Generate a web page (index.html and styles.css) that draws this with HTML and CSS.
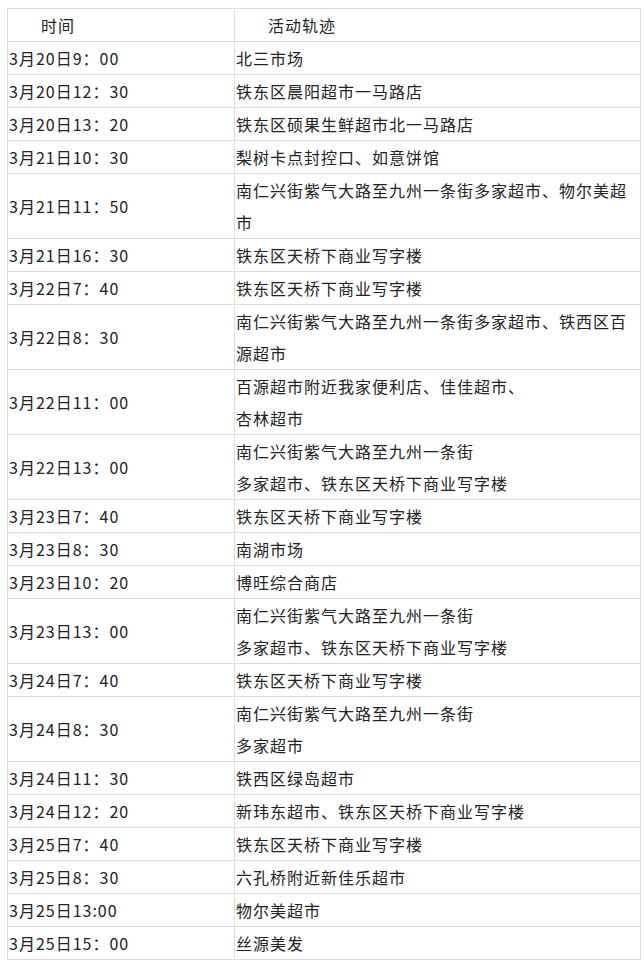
FILE: index.html
```html
<!DOCTYPE html>
<html lang="zh-CN">
<head>
<meta charset="utf-8">
<title>活动轨迹</title>
<link rel="stylesheet" href="styles.css">
</head>
<body>
<table class="track">
  <colgroup>
    <col class="col-time">
    <col class="col-place">
  </colgroup>
  <thead>
    <tr><th>时间</th><th>活动轨迹</th></tr>
  </thead>
  <tbody>
    <tr><td>3月20日9：00</td><td>北三市场</td></tr>
    <tr><td>3月20日12：30</td><td>铁东区晨阳超市一马路店</td></tr>
    <tr><td>3月20日13：20</td><td>铁东区硕果生鲜超市北一马路店</td></tr>
    <tr><td>3月21日10：30</td><td>梨树卡点封控口、如意饼馆</td></tr>
    <tr><td>3月21日11：50</td><td>南仁兴街紫气大路至九州一条街多家超市、物尔美超<br>市</td></tr>
    <tr><td>3月21日16：30</td><td>铁东区天桥下商业写字楼</td></tr>
    <tr><td>3月22日7：40</td><td>铁东区天桥下商业写字楼</td></tr>
    <tr><td>3月22日8：30</td><td>南仁兴街紫气大路至九州一条街多家超市、铁西区百<br>源超市</td></tr>
    <tr><td>3月22日11：00</td><td>百源超市附近我家便利店、佳佳超市、<br>杏林超市</td></tr>
    <tr><td>3月22日13：00</td><td>南仁兴街紫气大路至九州一条街<br>多家超市、铁东区天桥下商业写字楼</td></tr>
    <tr><td>3月23日7：40</td><td>铁东区天桥下商业写字楼</td></tr>
    <tr><td>3月23日8：30</td><td>南湖市场</td></tr>
    <tr><td>3月23日10：20</td><td>博旺综合商店</td></tr>
    <tr><td>3月23日13：00</td><td>南仁兴街紫气大路至九州一条街<br>多家超市、铁东区天桥下商业写字楼</td></tr>
    <tr><td>3月24日7：40</td><td>铁东区天桥下商业写字楼</td></tr>
    <tr><td>3月24日8：30</td><td>南仁兴街紫气大路至九州一条街<br>多家超市</td></tr>
    <tr><td>3月24日11：30</td><td>铁西区绿岛超市</td></tr>
    <tr><td>3月24日12：20</td><td>新玮东超市、铁东区天桥下商业写字楼</td></tr>
    <tr><td>3月25日7：40</td><td>铁东区天桥下商业写字楼</td></tr>
    <tr><td>3月25日8：30</td><td>六孔桥附近新佳乐超市</td></tr>
    <tr><td>3月25日13:00</td><td>物尔美超市</td></tr>
    <tr><td>3月25日15：00</td><td>丝源美发</td></tr>
  </tbody>
</table>
</body>
</html>
```

FILE: styles.css
```css
html, body {
  background: #fff;
}
body {
  margin: 8px 0 0 7px;
  font-family: "Noto Sans CJK SC", "Noto Sans", sans-serif;
  font-size: 16px;
  color: #222;
}
.track {
  border-collapse: collapse;
  table-layout: fixed;
  width: 633px;
}
.col-time { width: 227px; }
.col-place { width: 406px; }
.track th,
.track td {
  border: 1px solid #dcdcdc;
  padding: 0 0 0 1px;
  line-height: 32px;
  height: 32px;
  letter-spacing: 1px;
  text-align: left;
  vertical-align: middle;
  white-space: nowrap;
  font-weight: normal;
}
.track th {
  padding-left: 33px;
}
```
